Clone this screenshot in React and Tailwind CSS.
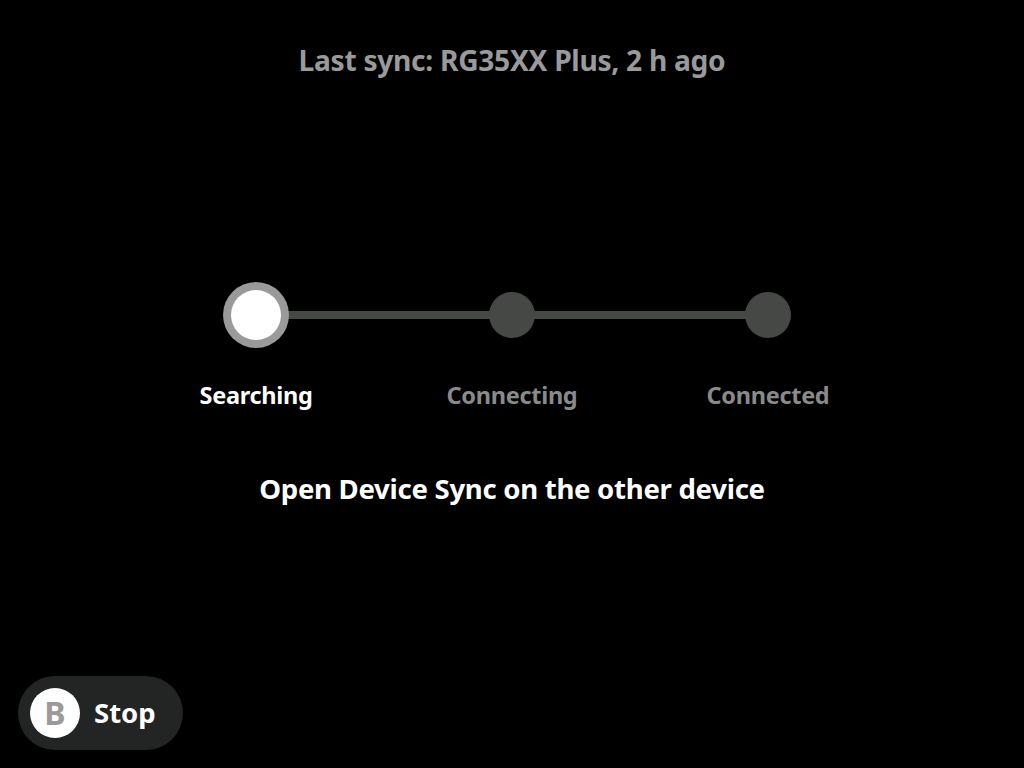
export default function App() {
    const steps = [
        { label: "Searching", active: true },
        { label: "Connecting", active: false },
        { label: "Connected", active: false },
    ];

    return (
        <div className="w-[1024px] h-[768px] bg-black flex flex-col items-center font-['Noto_Sans',sans-serif] font-bold overflow-hidden">
            <p className="mt-[41px] text-[28.2px] leading-[38px] text-[#9a9a9a] tracking-[-0.3px]">Last sync: RG35XX Plus, 2 h ago</p>

            {/* stepper */}
            <div className="relative mt-[203px] w-[768px]">
                <div className="absolute left-[128px] right-[128px] top-[29px] h-[8px] bg-[#464846]" />
                <div className="relative grid grid-cols-3">
                    {steps.map((step) => (
                        <div key={step.label} className="flex justify-center items-center h-[66px]">
                            {step.active ? (
                                <div className="w-[66px] h-[66px] rounded-full bg-[#9a9a9a] flex items-center justify-center">
                                    <div className="w-[50px] h-[50px] rounded-full bg-white" />
                                </div>
                            ) : (
                                <div className="w-[46px] h-[46px] rounded-full bg-[#464846]" />
                            )}
                        </div>
                    ))}
                </div>
                <div className="grid grid-cols-3 mt-[31px]">
                    {steps.map((step) => (
                        <p key={step.label} className={`text-center text-[23.5px] leading-[32px] tracking-[-0.3px] ${step.active ? "text-white" : "text-[#8a8a8a]"}`}>
                            {step.label}
                        </p>
                    ))}
                </div>
            </div>

            <p className="mt-[58px] text-[27.6px] leading-[38px] text-white tracking-[-0.3px]">Open Device Sync on the other device</p>

            <div className="self-start mt-auto mb-[18px] ml-[18px] h-[74px] w-[165px] rounded-full bg-[#222523] flex items-center pl-[12px] gap-[14px]">
                <div className="w-[50px] h-[50px] rounded-full bg-white flex items-center justify-center text-[32px] text-[#9a9a9a] leading-none">B</div>
                <span className="text-[27.5px] text-white leading-none">Stop</span>
            </div>
        </div>
    );
}
